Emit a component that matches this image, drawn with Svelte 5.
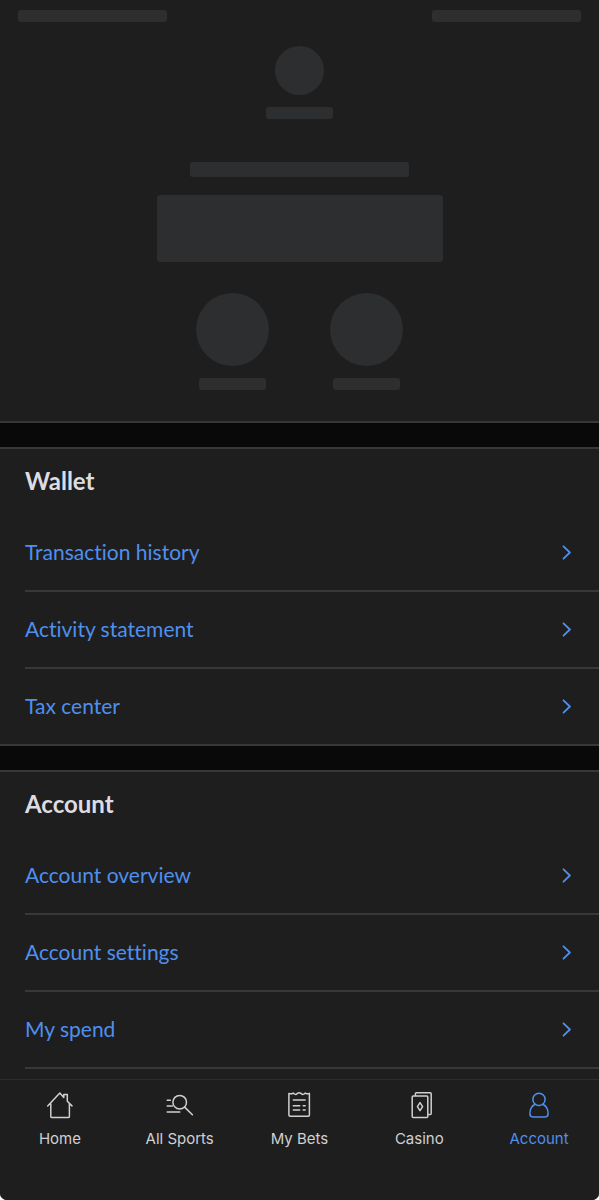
<script>
  // Link groups shown under the profile summary
  const sections = [
    {
      title: "Wallet",
      links: [
        { label: "Transaction history", href: "#transactions" },
        { label: "Activity statement", href: "#activity" },
        { label: "Tax center", href: "#tax" },
      ],
    },
    {
      title: "Account",
      links: [
        { label: "Account overview", href: "#overview" },
        { label: "Account settings", href: "#settings" },
        { label: "My spend", href: "#spend" },
      ],
    },
  ];

  const tabs = [
    { id: "home", label: "Home" },
    { id: "sports", label: "All Sports" },
    { id: "bets", label: "My Bets" },
    { id: "casino", label: "Casino" },
    { id: "account", label: "Account" },
  ];

  let activeTab = $state("account");
</script>

<div class="app">
  <!-- Profile placeholder while the balance loads -->
  <header class="profile" aria-busy="true" aria-label="Loading profile">
    <div class="top-row">
      <span class="bone top-bar"></span>
      <span class="bone top-bar"></span>
    </div>
    <span class="bone avatar"></span>
    <span class="bone caption"></span>
    <span class="bone heading"></span>
    <span class="bone balance"></span>
    <div class="actions">
      <div class="action">
        <span class="bone circle"></span>
        <span class="bone caption"></span>
      </div>
      <div class="action">
        <span class="bone circle"></span>
        <span class="bone caption"></span>
      </div>
    </div>
  </header>

  <main>
    {#each sections as section}
      <section>
        <h2>{section.title}</h2>
        <ul>
          {#each section.links as link}
            <li>
              <a href={link.href}>
                <span>{link.label}</span>
                <svg class="chevron" width="10" height="16" viewBox="0 0 10 16" aria-hidden="true">
                  <path d="M1.5 2.3L7.9 8.5L1.5 14.7" />
                </svg>
              </a>
            </li>
          {/each}
        </ul>
      </section>
    {/each}
  </main>

  <!-- Bottom tab bar -->
  <nav aria-label="Main">
    {#each tabs as tab}
      <button
        class="tab"
        class:active={activeTab === tab.id}
        aria-current={activeTab === tab.id ? "page" : undefined}
        onclick={() => (activeTab = tab.id)}
      >
        <svg width="28" height="28" viewBox="0 0 28 28" aria-hidden="true">
          {#if tab.id === "home"}
            <path d="M1.7 14.9L13.8 2L17.8 6.4V3.4H21.3V10.2L26 14.9M4.8 12.5V25.4Q4.8 26.6 6 26.6H22.2Q23.4 26.6 23.4 25.4V12.5" />
          {:else if tab.id === "sports"}
            <circle cx="13.7" cy="11.2" r="6.8" />
            <path d="M18.6 16.1L26.4 23.8M1.2 9.2H4.4M1.2 15H6.4M1.2 21H13.8" />
          {:else if tab.id === "bets"}
            <path d="M3.9 2.4Q6 3.4 8.1 2.1Q10.3 4.5 12.3 2.4Q14.2 1.2 16.1 2.4Q18.1 4.5 20.3 2.1Q22.3 3.4 24.4 2.4V24Q24.4 25.2 23.2 25.2H5.1Q3.9 25.2 3.9 24Z" />
            <path d="M8.3 9H20.2M8.3 14.8H14.7M18.2 14.8H20.2M8.3 19H14.7M18.2 19H20.2" />
          {:else if tab.id === "casino"}
            <rect x="7.2" y="4.9" width="15.6" height="21.6" rx="1" />
            <path d="M10.4 4.5V2.8Q10.4 1.8 11.4 1.8H25.2Q26.2 1.8 26.2 2.8V22.6Q26.2 23.6 25.2 23.6H23.4M15 11.6L17.6 15.6L15 19.6L12.4 15.6Z" />
          {:else}
            <circle cx="14" cy="8.4" r="6.1" />
            <path d="M10.2 13.3C6.9 14.8 4.9 18.2 4.9 22.8Q4.9 25.9 7.7 25.9H20.3Q23.1 25.9 23.1 22.8C23.1 18.2 21.1 14.8 17.8 13.3" />
          {/if}
        </svg>
        <span>{tab.label}</span>
      </button>
    {/each}
  </nav>
</div>

<style>
  :global(body) {
    margin: 0;
    background: #fff;
  }

  .app {
    display: flex;
    flex-direction: column;
    min-height: 100vh;
    overflow: clip;
    background: #1e1e1e;
    border-radius: 0 0 7px 7px;
    font-family: Lato, "Open Sans", sans-serif;
    font-variant-ligatures: none;
  }

  /* Skeleton */
  .profile {
    display: flex;
    flex-direction: column;
    align-items: center;
    padding: 10px 18px 31px;
  }

  .bone {
    display: block;
    background: #2d2e30;
    border-radius: 3px;
  }

  .top-row {
    display: flex;
    justify-content: space-between;
    align-self: stretch;
  }

  .top-bar {
    width: 149px;
    height: 12px;
  }

  .avatar {
    width: 49px;
    height: 49px;
    margin: 24px 0 12px;
    border-radius: 50%;
  }

  .caption {
    width: 67px;
    height: 12px;
  }

  .heading {
    width: 219px;
    height: 15px;
    margin: 43px 0 18px;
  }

  .balance {
    width: 286px;
    height: 67px;
  }

  .actions {
    display: flex;
    gap: 61px;
    margin-top: 31px;
  }

  .action {
    display: flex;
    flex-direction: column;
    align-items: center;
    gap: 12px;
  }

  .circle {
    width: 73px;
    height: 73px;
    border-radius: 50%;
  }

  /* Link groups */
  section::before {
    content: "";
    display: block;
    height: 24px;
    background: #090909;
    border-top: 2px solid #38383a;
    border-bottom: 2px solid #38383a;
  }

  h2 {
    margin: 0;
    padding: 17px 25px 19px;
    color: #dcdce2;
    font-size: 24px;
    font-weight: 700;
    line-height: 30px;
  }

  ul {
    margin: 0;
    padding: 0 0 0 25px;
    list-style: none;
  }

  li {
    border-bottom: 2px solid #38383a;
  }

  section:not(:last-child) li:last-child {
    border-bottom: none;
  }

  a {
    display: flex;
    align-items: center;
    justify-content: space-between;
    padding: 22px 27px 23px 0;
    color: #4f8fee;
    font-size: 21px;
    line-height: 30px;
    text-decoration: none;
  }

  svg {
    fill: none;
    stroke: currentColor;
    stroke-width: 1.5;
    stroke-linecap: round;
    stroke-linejoin: round;
  }

  .chevron {
    flex: none;
    stroke-width: 1.8;
  }

  /* Tab bar */
  nav {
    position: sticky;
    bottom: 0;
    display: flex;
    margin-top: auto;
    padding: 11px 0 51px;
    background: #1e1e1e;
    border-top: 1px solid #2e2e30;
  }

  .tab {
    display: flex;
    flex: 1;
    flex-direction: column;
    align-items: center;
    gap: 10px;
    padding: 0;
    border: none;
    background: none;
    color: #d0d0d2;
    font-family: Inter, Roboto, sans-serif;
    font-size: 15px;
    line-height: 20px;
    cursor: pointer;
  }

  .tab.active {
    color: #4f8fee;
  }
</style>
